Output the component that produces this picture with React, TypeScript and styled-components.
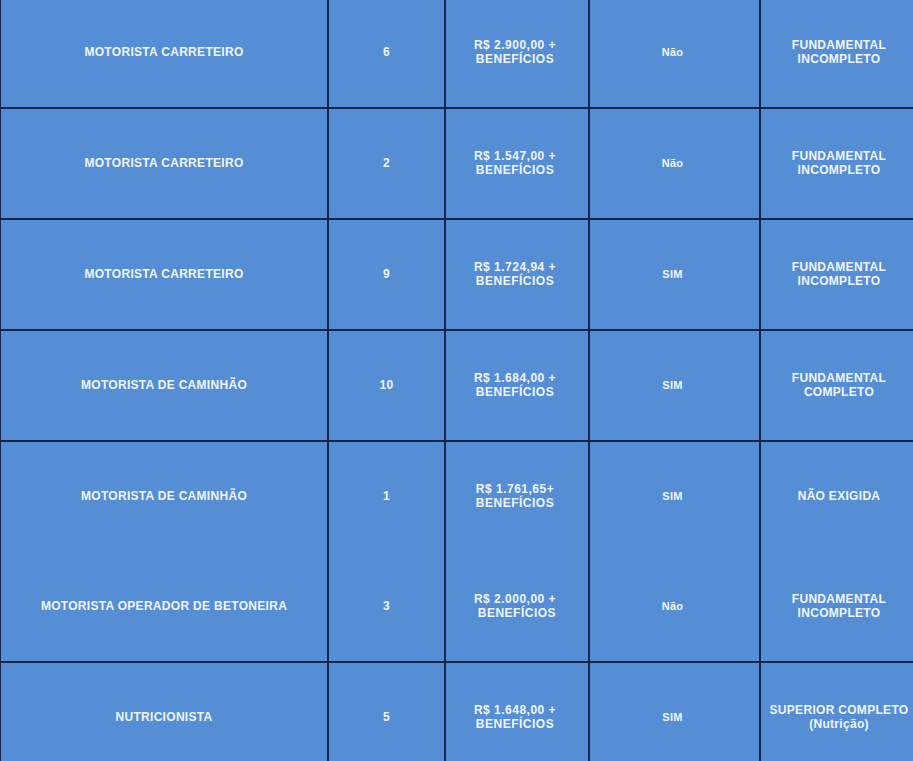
import React from "react";
import styled, { createGlobalStyle } from "styled-components";

const GlobalStyle = createGlobalStyle`
  html, body {
    margin: 0;
    padding: 0;
    background: #558ed5;
    overflow: hidden;
  }
`;

const Sheet = styled.div`
  width: 916px;
  margin-top: -2px;
  border-left: 1px solid #14264a;
  font-family: "Liberation Sans", Arial, sans-serif;
  font-weight: bold;
  color: #f0f5fc;
  background: #558ed5;
`;

const Row = styled.div<{ $open?: boolean; $height?: number }>`
  display: grid;
  grid-template-columns: 328px 117px 144px 171px 1fr;
  height: ${({ $height }) => $height ?? 111}px;
  box-sizing: border-box;
  border-bottom: ${({ $open }) => ($open ? "none" : "2px solid #14264a")};
`;

const Cell = styled.div<{ $size?: number; $spacing?: number; $shift?: number }>`
  display: flex;
  align-items: center;
  justify-content: center;
  text-align: center;
  box-sizing: border-box;
  padding-bottom: 2px;
  padding-right: ${({ $shift }) => $shift ?? 0}px;
  border-right: 2px solid #14264a;
  font-size: ${({ $size }) => $size ?? 12}px;
  letter-spacing: ${({ $spacing }) => $spacing ?? 0.3}px;
  line-height: 14px;
  white-space: pre-line;

  &:last-child {
    border-right: none;
  }
`;

interface Vaga {
  cargo: string;
  qtd: string;
  salario: string;
  cnh: string;
  escolaridade: string;
  open?: boolean;
  height?: number;
}

const vagas: Vaga[] = [
  { cargo: "MOTORISTA CARRETEIRO", qtd: "6", salario: "R$ 2.900,00 +\nBENEFÍCIOS", cnh: "Não", escolaridade: "FUNDAMENTAL\nINCOMPLETO" },
  { cargo: "MOTORISTA CARRETEIRO", qtd: "2", salario: "R$ 1.547,00 +\nBENEFÍCIOS", cnh: "Não", escolaridade: "FUNDAMENTAL\nINCOMPLETO" },
  { cargo: "MOTORISTA CARRETEIRO", qtd: "9", salario: "R$ 1.724,94 +\nBENEFÍCIOS", cnh: "SIM", escolaridade: "FUNDAMENTAL\nINCOMPLETO" },
  { cargo: "MOTORISTA DE CAMINHÃO", qtd: "10", salario: "R$ 1.684,00 +\nBENEFÍCIOS", cnh: "SIM", escolaridade: "FUNDAMENTAL\nCOMPLETO" },
  { cargo: "MOTORISTA DE CAMINHÃO", qtd: "1", salario: "R$ 1.761,65+\nBENEFÍCIOS", cnh: "SIM", escolaridade: "NÃO EXIGIDA", open: true, height: 110 },
  { cargo: "MOTORISTA OPERADOR DE BETONEIRA", qtd: "3", salario: "R$ 2.000,00 +\n\u00a0BENEFÍCIOS", cnh: "Não", escolaridade: "FUNDAMENTAL\nINCOMPLETO" },
  { cargo: "NUTRICIONISTA", qtd: "5", salario: "R$ 1.648,00 +\nBENEFÍCIOS", cnh: "SIM", escolaridade: "SUPERIOR COMPLETO\n(Nutrição)" },
];

export default function App() {
  return (
    <>
      <GlobalStyle />
      <Sheet>
        {vagas.map((v, i) => (
          <Row key={i} $open={v.open} $height={v.height}>
            <Cell>{v.cargo}</Cell>
            <Cell>{v.qtd}</Cell>
            <Cell $spacing={0.5} $shift={4}>{v.salario}</Cell>
            <Cell $size={11} $shift={4}>{v.cnh}</Cell>
            <Cell $spacing={0.3}>{v.escolaridade}</Cell>
          </Row>
        ))}
      </Sheet>
    </>
  );
}
